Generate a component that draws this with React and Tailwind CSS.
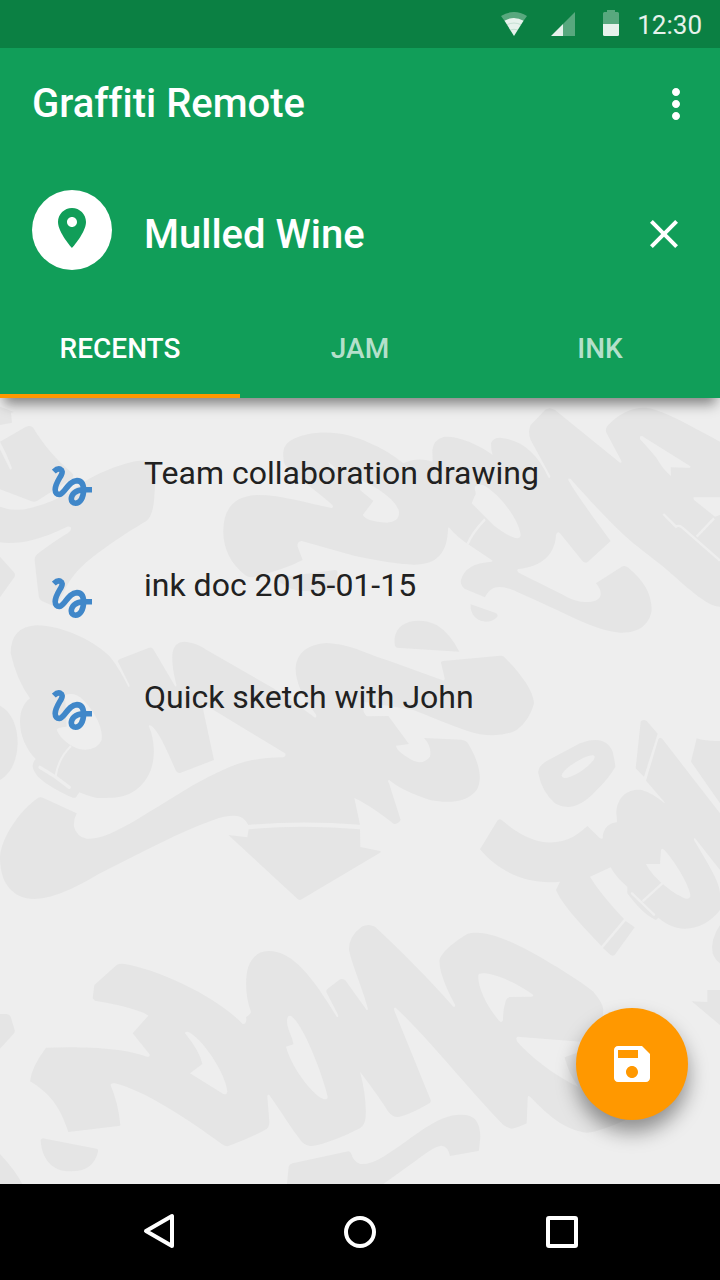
const TABS = ["RECENTS", "JAM", "INK"];
const DOCS = ["Team collaboration drawing", "ink doc 2015-01-15", "Quick sketch with John"];

function StatusBar() {
  return (
    <div className="flex h-12 items-center justify-end bg-[#0b8043] pr-[18px] text-white/90">
      <div className="flex items-end gap-6 pb-0.5">
        <svg className="h-6 w-[26px]" viewBox="0 0 26 24" fill="currentColor" aria-hidden="true">
          <path opacity=".35" d="M0 4Q13-4 26 4L22 9.500Q13 3 4 9.500Z" />
          <path d="M3.500 8.800Q13 3.200 22.500 8.800L13 24Z" />
          <path d="M6 12.600Q13 9.500 20 12.600M9 18Q13 16.500 17 18" fill="none" stroke="#0b8043" strokeWidth=".8" opacity=".2" />
        </svg>
        <svg className="h-6 w-6" viewBox="0 0 24 24" fill="currentColor" aria-hidden="true">
          <path opacity=".35" d="M24 0V24H12V12Z" />
          <path d="M12 12V24H0Z" />
        </svg>
        <svg className="h-[26px] w-6" viewBox="0 0 24 26" fill="currentColor" aria-hidden="true">
          <path opacity=".35" d="M8 0H16V2H18.500Q20 2 20 3.500V14H4V3.500Q4 2 5.500 2H8Z" />
          <path d="M4 14H20V24.500Q20 26 18.500 26H5.500Q4 26 4 24.500Z" />
        </svg>
      </div>
      <span className="ml-3.5 pt-0.5 text-[26px] leading-8">12:30</span>
    </div>
  );
}

function GraffitiArt() {
  return (
    <svg
      className="absolute inset-0 h-full w-full"
      viewBox="0 24 2160 2358"
      preserveAspectRatio="xMidYMid slice"
      fill="#e5e5e5"
      aria-hidden="true"
    >
      <path d="M0 50L42 66L33 68L36 98L0 105Z" />
      <path d="M0 155L78 110Q92 104 100 114C130 165 170 210 215 248Q225 256 215 266L112 332Q104 337 95 334L0 298V178L30 238Q36 241 35 232Q20 190 0 155Z" />
      <path d="M0 350Q45 368 100 352Q160 335 205 308L270 265Q340 228 405 214Q440 208 460 216Q468 260 463 320Q460 375 440 392C360 440 270 500 230 545Q200 580 190 610L165 650L126 633Q117 628 116 618L104 512Q103 500 112 492Q160 455 205 428Q216 420 212 412Q207 407 195 413C120 450 50 465 0 457Z" />
      <path d="M0 500L43 548Q48 555 43 562L0 622Z" />
      <path d="M850 185Q852 160 880 147C950 115 1040 125 1110 160Q1160 180 1210 220Q1250 200 1298 215L1297 180Q1300 150 1330 141C1370 137 1430 160 1478 195Q1473 180 1473 160Q1478 143 1500 143C1560 148 1610 185 1645 262Q1650 268 1651 258L1592 150Q1582 125 1592 105L1635 60Q1648 50 1665 60L1860 218Q1866 220 1864 212L1820 130Q1812 115 1830 100C1870 60 1920 45 1960 58C2030 80 2100 125 2160 155V650C2120 650 2060 590 1990 530L1900 460C1830 400 1760 320 1712 267Q1702 262 1706 272C1740 330 1790 395 1832 453L1764 515Q1756 521 1748 514L1680 430Q1672 422 1668 435C1665 490 1630 530 1555 537Q1548 540 1556 548L1690 615C1740 645 1790 640 1800 620Q1808 605 1788 580L1865 530Q1875 525 1885 533C1930 570 1955 610 1955 660C1950 700 1920 730 1860 728C1780 722 1680 660 1560 610C1510 585 1475 580 1455 622L1395 597Q1380 585 1383 570Q1395 520 1475 515Q1480 514 1475 510L1408 465Q1370 440 1348 413Q1344 410 1344 418C1342 490 1310 525 1240 524C1160 520 1080 500 1065 498L905 453Q890 455 893 470L908 510Q850 540 757 562Q740 560 735 555C690 520 668 470 670 420Q672 320 770 315C850 315 920 340 995 354Q1002 352 997 345C960 310 900 270 855 225Q848 210 850 185Z" />
      <path d="M820 565L1005 540Q1015 540 1012 555L1008 600Q900 610 870 595Z" />
      <path d="M1412 643L1485 668Q1495 672 1492 680C1470 705 1420 700 1412 655Z" />
      <path d="M1190 773Q1182 770 1184 745C1190 690 1260 680 1310 705Q1350 730 1378 785Z" />
      <g fill="#eee">
        <path d="M1080 300L1120 333L1088 375Q1100 395 1160 398Q1200 395 1197 365C1190 330 1130 290 1080 270Z" />
        <path d="M1425 300Q1430 315 1423 320L1415 340Q1450 375 1480 405C1510 430 1560 460 1562 435C1560 400 1510 320 1450 285Q1420 280 1425 300Z" />
        <path d="M1920 140Q1925 135 1932 142L2070 228Q2076 235 2060 233L2012 232L2013 258Q1990 240 1970 205Q1950 180 1920 148Z" />
        <path d="M2080 322H2160V375L2145 380L2082 330Z" />
        <path d="M985 215L1010 238L990 232Z" />
      </g>
      <path d="M1455 388Q1415 430 1403 462M1990 372L2028 410Q2038 404 2048 414L2160 512M2142 385L2090 440" fill="none" stroke="#eee" strokeWidth="7" />

      <path d="M32 790Q32 710 110 706C200 708 290 760 330 800C355 830 375 870 385 890Q390 892 388 884L354 815Q352 810 362 806L445 774Q455 770 460 778L525 888Q530 892 529 884Q515 830 517 795Q520 755 555 755Q590 758 620 780L820 895Q900 950 945 983Q952 982 947 972C905 920 885 870 887 830Q895 765 980 759C1060 765 1080 785 1160 810L1328 871Q1335 872 1334 865L1323 818Q1322 814 1330 813L1500 797Q1510 796 1515 803C1560 850 1600 900 1602 940Q1590 990 1550 1020Q1510 1042 1440 1033C1380 1020 1320 990 1240 960L1090 935Q1085 965 1100 979L1165 978L1227 1062L1188 1067Q1190 1085 1240 1112Q1270 1125 1290 1100Q1296 1070 1272 1044L1385 1049Q1400 1052 1405 1062C1440 1120 1448 1170 1430 1200C1400 1240 1340 1240 1290 1230C1230 1210 1190 1190 1168 1170Q1160 1170 1167 1180L1202 1290Q1195 1302 1182 1302Q1130 1260 1080 1232L1063 1224L1080 1304Q900 1290 745 1305Q735 1285 720 1280Q690 1272 640 1290C540 1325 430 1385 300 1450C200 1510 130 1535 80 1525C20 1510 0 1460 0 1400C5 1340 60 1260 115 1223Q122 1220 130 1224L230 1270Q220 1290 222 1310Q230 1340 260 1346C330 1350 420 1280 580 1185C700 1120 740 1105 850 1102Q860 1098 855 1090L605 938L642 1110L540 1149Q533 1150 528 1143C500 1080 480 1030 455 1008Q445 1003 447 1010C465 1050 470 1120 440 1165C400 1225 350 1225 290 1224Q255 1215 238 1207L228 1222Q222 1225 215 1222C150 1190 105 1165 98 1130Q98 1115 107 1107C70 1070 50 1010 65 960Q75 935 90 925Q50 870 32 790Z" />
      <path d="M0 947C35 965 53 1010 53 1060Q50 1140 0 1170Z" />
      <path d="M685 1335L742 1342L746 1318Q910 1302 1080 1318L1081 1371L1140 1383Q1145 1385 1140 1388L905 1528Q899 1532 893 1527Z" />
      <path d="M195 915Q225 905 250 930C290 970 310 1020 305 1050Q290 1085 240 1078C210 1070 180 1045 170 1020Q168 1012 200 1010Z" fill="#eee" />
      <path d="M120 1132L165 1160L208 1192" fill="none" stroke="#eee" strokeWidth="10" strokeLinecap="round" />
      <path d="M213 1068Q175 1105 167 1158" fill="none" stroke="#eee" strokeWidth="6" />

      <path
        fillRule="evenodd"
        d="M1615 1150Q1612 1130 1640 1113L1740 1060C1790 1040 1825 1050 1838 1085Q1845 1115 1846 1130Q1830 1160 1790 1200C1740 1255 1700 1260 1665 1240Q1625 1205 1615 1150ZM1685 1155C1690 1135 1760 1092 1780 1096Q1790 1100 1775 1117C1750 1145 1710 1165 1693 1164Q1684 1162 1685 1155Z"
      />
      <path d="M1440 1378L1492 1292Q1498 1284 1505 1290C1590 1365 1660 1370 1720 1340Q1745 1325 1762 1308L1800 1345Q1810 1350 1808 1338Q1815 1300 1850 1297Q1852 1295 1849 1270C1850 1225 1880 1195 1925 1200Q1960 1210 1993 1240Q1996 1240 1990 1232L1938 1172L1975 1048Q1980 1038 1988 1048L2160 1270V1440L2085 1345Q2078 1342 2085 1355C2130 1430 2160 1480 2160 1510V1560C2130 1600 2080 1625 2030 1613Q2000 1605 1975 1583L1968 1590Q1930 1575 1882 1510V1490Q1850 1465 1832 1432L1770 1460Q1800 1510 1872 1587L1804 1668C1750 1610 1690 1550 1668 1500L1680 1475C1590 1485 1500 1450 1440 1378Z" />
      <path d="M1983 1380Q1986 1372 1995 1382C2030 1420 2075 1500 2071 1520Q2065 1530 2050 1523C2000 1500 1950 1450 1938 1422L1980 1422Z" fill="#eee" />
      <path d="M1987 1480L1930 1532M1896 1510L1962 1574" fill="none" stroke="#eee" strokeWidth="7" strokeLinecap="round" />
      <path d="M1877 1593L1904 1612L1846 1692Q1840 1700 1832 1695L1809 1674Z" />
      <path d="M1922 995Q1928 986 1940 993L1973 1031L1932 1160L1907 1135Z" />
      <path d="M2090 1045Q2120 1055 2160 1053V1240L2073 1115Z" />
      <path d="M2160 1605Q2130 1650 2138 1690Q2145 1710 2160 1720Z" />
      <path d="M2075 1834L2122 1836V1800H2160V1905Z" />

      <path d="M278 1825L283 1785L350 1725Q358 1720 375 1722C480 1740 650 1820 728 1902Q738 1903 739 1890L738 1882Q752 1872 753 1866C735 1820 735 1760 745 1730Q765 1680 810 1683C880 1685 940 1765 1010 1880Q1017 1884 1014 1874L980 1808Q976 1800 985 1795L1020 1768Q1030 1764 1037 1772L1080 1832L1100 1860Q1106 1862 1102 1850C1085 1790 1055 1720 1047 1680Q1045 1640 1085 1610Q1105 1600 1125 1610C1200 1680 1290 1770 1360 1850Q1368 1852 1364 1842C1330 1780 1310 1720 1322 1700Q1340 1670 1400 1633C1440 1620 1500 1635 1600 1690C1680 1735 1750 1780 1780 1805Q1810 1840 1810 1860L1800 1960L1552 1940Q1546 1945 1552 1955C1600 2010 1680 2065 1735 2090Q1705 2050 1694 2002L1740 1985L1900 2180Q1800 2225 1760 2228C1690 2220 1640 2170 1590 2120Q1583 2115 1583 2125L1580 2200Q1550 2215 1535 2216Q1525 2215 1510 2205C1400 2090 1280 1940 1187 1853Q1180 1852 1183 1862L1292 2130Q1294 2136 1288 2140Q1220 2180 1190 2181Q1175 2178 1165 2165C1130 2110 1110 2085 1080 2045Q1100 2120 1097 2180Q1095 2205 1080 2215C1030 2240 970 2265 935 2268Q920 2268 905 2255C870 2210 840 2160 808 2115Q802 2110 802 2120L808 2195Q808 2210 800 2217Q750 2245 685 2268Q675 2270 665 2262C560 2185 430 2100 345 2080Q330 2078 332 2086Q355 2140 361 2205Q361 2208 355 2208L205 2226C180 2150 150 2110 90 2074Q95 2030 138 1973C250 1968 380 1975 440 2000Q452 2000 448 1992L398 1930L445 1877Q440 1872 430 1868C380 1848 330 1840 285 1832Z" />
      <g fill="#eee">
        <path d="M555 1928Q560 1922 570 1928C620 1960 680 2060 682 2105Q680 2116 670 2112L570 2050L607 2022Q600 1985 555 1930Z" />
        <path d="M861 1890Q862 1875 873 1878C910 1900 970 2060 983 2120Q983 2130 970 2127C930 2110 870 2020 858 1970L880 1963Q880 1955 870 1930Q860 1905 861 1890Z" />
        <path d="M1435 1755Q1437 1748 1455 1750C1500 1755 1560 1785 1600 1815Q1600 1822 1590 1820L1530 1821Q1522 1822 1518 1830Q1508 1860 1509 1890Q1505 1900 1498 1893C1460 1850 1432 1790 1435 1755Z" />
      </g>
      <path d="M122 2250Q125 2243 135 2246L290 2276Q296 2278 294 2285Q280 2345 210 2344C160 2345 125 2310 122 2250Z" />
      <path d="M0 1872H20Q28 1872 32 1880L44 1920Q46 1926 41 1931L0 1976Z" />
      <path d="M0 2292Q45 2340 67 2382H0Z" />
      <path d="M861 2382L866 2330Q868 2322 878 2320L1045 2284Q1052 2284 1054 2292Q1060 2315 1080 2322Q1110 2325 1150 2300C1220 2260 1300 2180 1370 2175C1420 2170 1440 2190 1441 2240L1437 2280Q1437 2284 1430 2284L1350 2298Q1345 2270 1325 2267Q1305 2267 1250 2310L1150 2382Z" />
    </svg>
  );
}

function GestureIcon() {
  return (
    <svg className="size-10 shrink-0" viewBox="0 0 40 40" fill="none" stroke="#4087c9" strokeWidth="5.6" aria-hidden="true">
      <path d="M1.800 5.600C4.500 3 6.500 2.500 8.300 3.200C10.500 4.200 10.600 6.500 9.300 9C7.500 12.500 3.300 18 3.200 23.500C3.200 27 5 28.600 7.500 28.400C13 27.600 16 14.800 25 14.600C29.800 14.600 31.400 18.500 31.600 23.500C31.700 32 28 37.200 23.600 37.200C21 37.200 19.300 35.400 19.300 33C19.300 29.500 22.500 23.700 31.500 23.700H40" />
    </svg>
  );
}

export default function App() {
  return (
    <div className="flex min-h-screen flex-col bg-[#eee] font-['Roboto',sans-serif]">
      <header className="relative z-10 bg-[#119e59] text-white shadow-[0_10px_12px_-4px_rgba(0,0,0,0.45)]">
        <StatusBar />
        <div className="flex h-28 items-center justify-between pr-5 pl-8">
          <h1 className="text-[40px] leading-12 font-medium [font-variant-ligatures:none]">Graffiti Remote</h1>
          <button type="button" aria-label="More options">
            <svg className="size-12" viewBox="0 0 24 24" fill="currentColor" aria-hidden="true">
              <path d="M12 8c1.100 0 2-.9 2-2s-.9-2-2-2-2 .9-2 2 .9 2 2 2zm0 2c-1.100 0-2 .9-2 2s.9 2 2 2 2-.9 2-2-.9-2-2-2zm0 6c-1.100 0-2 .9-2 2s.9 2 2 2 2-.9 2-2-.9-2-2-2z" />
            </svg>
          </button>
        </div>
        <div className="flex h-[138px] items-center gap-8 px-8 pt-3">
          <div className="mb-2.5 flex size-20 shrink-0 items-center justify-center rounded-full bg-white pb-1">
            <svg className="size-12" viewBox="0 0 24 24" fill="#119e59" aria-hidden="true">
              <path d="M12 2C8.130 2 5 5.130 5 9c0 5.250 7 13 7 13s7-7.750 7-13c0-3.870-3.130-7-7-7zm0 9.500c-1.380 0-2.500-1.120-2.500-2.500s1.120-2.500 2.500-2.500 2.500 1.120 2.500 2.500-1.120 2.500-2.500 2.500z" />
            </svg>
          </div>
          <h2 className="flex-1 text-[40px] leading-12 font-medium">Mulled Wine</h2>
          <button type="button" aria-label="Close" className="mb-0.5">
            <svg className="size-12" viewBox="0 0 24 24" fill="currentColor" aria-hidden="true">
              <path d="M19 6.410L17.590 5 12 10.590 6.410 5 5 6.410 10.590 12 5 17.590 6.410 19 12 13.410 17.590 19 19 17.590 13.410 12z" />
            </svg>
          </button>
        </div>
        <div role="tablist" className="grid h-[100px] grid-cols-3">
          {TABS.map((tab, i) => (
            <button
              key={tab}
              type="button"
              role="tab"
              aria-selected={i === 0}
              className={
                "border-b-4 pt-1.5 text-[28px] leading-8 font-medium " +
                (i === 0 ? "border-b-[#ff9800] text-white" : "border-b-transparent text-white/70")
              }
            >
              {tab}
            </button>
          ))}
        </div>
      </header>

      <main className="relative flex-1 overflow-hidden">
        <GraffitiArt />
        <ul className="relative pt-8">
          {DOCS.map((doc) => (
            <li key={doc}>
              <button type="button" className="flex h-28 w-full items-center gap-[52px] pr-8 pl-[52px] text-left">
                <GestureIcon />
                <span className="pb-[26px] text-[32px] leading-10 text-[#212121]">{doc}</span>
              </button>
            </li>
          ))}
        </ul>
        <button
          type="button"
          aria-label="Save"
          className="absolute right-8 bottom-16 flex size-28 items-center justify-center rounded-full bg-[#ff9800] text-white shadow-[0_12px_20px_rgba(0,0,0,0.4)]"
        >
          <svg className="size-12" viewBox="0 0 24 24" fill="currentColor" aria-hidden="true">
            <path d="M17 3H5c-1.110 0-2 .9-2 2v14c0 1.100.89 2 2 2h14c1.100 0 2-.9 2-2V7l-4-4zm-5 16c-1.660 0-3-1.340-3-3s1.340-3 3-3 3 1.340 3 3-1.340 3-3 3zm3-10H5V5h10v4z" />
          </svg>
        </button>
      </main>

      <nav aria-label="System navigation" className="flex h-24 items-center justify-between bg-black px-[136px] text-white">
        <button type="button" aria-label="Back">
          <svg className="size-12" viewBox="0 0 48 48" fill="none" stroke="currentColor" strokeWidth="4" strokeLinejoin="round" aria-hidden="true">
            <path d="M10 23L36 8V38Z" />
          </svg>
        </button>
        <button type="button" aria-label="Home">
          <svg className="size-12" viewBox="0 0 48 48" fill="none" stroke="currentColor" strokeWidth="4" aria-hidden="true">
            <circle cx="24" cy="24" r="14" />
          </svg>
        </button>
        <button type="button" aria-label="Overview">
          <svg className="size-12" viewBox="0 0 48 48" fill="none" stroke="currentColor" strokeWidth="4" strokeLinejoin="round" aria-hidden="true">
            <rect x="12" y="10" width="28" height="28" rx="1" />
          </svg>
        </button>
      </nav>
    </div>
  );
}
